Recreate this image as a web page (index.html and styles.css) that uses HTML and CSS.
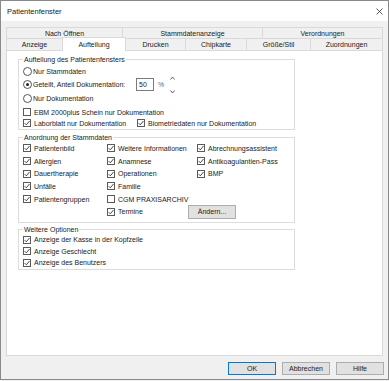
FILE: index.html
```html
<!DOCTYPE html>
<html lang="de">

<head>
    <meta charset="UTF-8">
    <meta name="viewport" content="width=device-width, initial-scale=1.0">
    <title>Patientenfenster</title>
    <link rel="stylesheet" href="styles.css">
</head>

<body>
    <div class="window">
        <header class="title_bar">
            <span class="title">Patientenfenster</span>
            <svg class="close" width="7" height="7" viewBox="0 0 7 7">
                <path d="M0.5 0.5L6.5 6.5M6.5 0.5L0.5 6.5" stroke="#333" stroke-width="0.8" />
            </svg>
        </header>

        <nav class="tabs">
            <div class="tab_row row_back">
                <div class="tab">Nach Öffnen</div>
                <div class="tab">Stammdatenanzeige</div>
                <div class="tab">Verordnungen</div>
            </div>
            <div class="tab_row row_front">
                <div class="tab">Anzeige</div>
                <div class="tab tab_active">Aufteilung</div>
                <div class="tab">Drucken</div>
                <div class="tab">Chipkarte</div>
                <div class="tab">Größe/Stil</div>
                <div class="tab">Zuordnungen</div>
            </div>
        </nav>

        <section class="panel">
            <fieldset class="group group_split">
                <legend>Aufteilung des Patientenfensters</legend>
                <div class="split_rows">
                    <div class="opt"><span class="radio"></span>Nur Stammdaten</div>
                    <div class="opt opt_share">
                        <span class="radio radio_on"></span>
                        <span class="share_label">Geteilt, Anteil Dokumentation:</span>
                        <span class="num_box">50</span>
                        <span class="percent">%</span>
                        <span class="spin">
                            <svg width="5" height="4" viewBox="0 0 5 4">
                                <path d="M0.5 3.5L2.5 1L4.5 3.5" fill="none" stroke="#555" stroke-width="0.9" />
                            </svg>
                            <svg width="5" height="4" viewBox="0 0 5 4">
                                <path d="M0.5 0.5L2.5 3L4.5 0.5" fill="none" stroke="#555" stroke-width="0.9" />
                            </svg>
                        </span>
                    </div>
                    <div class="opt"><span class="radio"></span>Nur Dokumentation</div>
                    <div class="opt opt_gap"><span class="check"></span>EBM 2000plus Schein nur Dokumentation</div>
                    <div class="opt opt_tight">
                        <span class="item item_labor"><span class="check check_on"></span>Laborblatt nur Dokumentation</span>
                        <span class="item"><span class="check check_on"></span>Biometriedaten nur Dokumentation</span>
                    </div>
                </div>
            </fieldset>

            <fieldset class="group group_stamm">
                <legend>Anordnung der Stammdaten</legend>
                <div class="stamm_grid">
                    <span class="item"><span class="check check_on"></span>Patientenbild</span>
                    <span class="item"><span class="check check_on"></span>Weitere Informationen</span>
                    <span class="item"><span class="check check_on"></span>Abrechnungsassistent</span>

                    <span class="item"><span class="check check_on"></span>Allergien</span>
                    <span class="item"><span class="check check_on"></span>Anamnese</span>
                    <span class="item"><span class="check check_on"></span>Antikoagulantien-Pass</span>

                    <span class="item"><span class="check check_on"></span>Dauertherapie</span>
                    <span class="item"><span class="check check_on"></span>Operationen</span>
                    <span class="item"><span class="check check_on"></span>BMP</span>

                    <span class="item"><span class="check check_on"></span>Unfälle</span>
                    <span class="item"><span class="check check_on"></span>Familie</span>
                    <span class="blank"></span>

                    <span class="item"><span class="check check_on"></span>Patientengruppen</span>
                    <span class="item"><span class="check"></span>CGM PRAXISARCHIV</span>
                    <span class="blank"></span>

                    <span class="blank"></span>
                    <span class="item"><span class="check check_on"></span>Termine</span>
                    <span class="btn btn_change">Ändern...</span>
                </div>
            </fieldset>

            <fieldset class="group group_more">
                <legend>Weitere Optionen</legend>
                <div class="more_rows">
                    <span class="item"><span class="check check_on"></span>Anzeige der Kasse in der Kopfzeile</span>
                    <span class="item"><span class="check check_on"></span>Anzeige Geschlecht</span>
                    <span class="item"><span class="check check_on"></span>Anzeige des Benutzers</span>
                </div>
            </fieldset>
        </section>

        <footer class="buttons">
            <span class="btn btn_default">OK</span>
            <span class="btn">Abbrechen</span>
            <span class="btn">Hilfe</span>
        </footer>
    </div>
</body>

</html>
```

FILE: styles.css
```css
* {
    margin: 0;
    padding: 0;
    box-sizing: border-box;
}

body {
    background-color: #f0f0f0;
    font-family: "Liberation Sans", Arial, sans-serif;
    font-size: 7px;
    color: #1a1a1a;
}

.window {
    width: 389px;
    height: 380px;
    border: 1px solid #8a8a8a;
    background-color: #f0f0f0;
    display: flex;
    flex-direction: column;
}

.title_bar {
    height: 20px;
    background-color: #fff;
    display: flex;
    align-items: center;
    justify-content: space-between;
    padding: 0 5px 0 6px;
}

.title {
    font-size: 7.5px;
}

/* tabs */
.tabs {
    margin: 6px 5px 0 5px;
}

.tab_row {
    display: grid;
}

.row_back {
    grid-template-columns: 116px 140px 1fr;
    height: 11px;
}

.row_front {
    grid-template-columns: 56px 64px 59px 61px 64px 1fr;
    height: 12px;
}

.tab {
    border-top: 1px solid #d9d9d9;
    border-left: 1px solid #d9d9d9;
    background-color: #f0f0f0;
    display: flex;
    align-items: center;
    justify-content: center;
    white-space: nowrap;
}

.tab:last-child {
    border-right: 1px solid #d9d9d9;
}

.tab_active {
    background-color: #fff;
    border-right: 1px solid #d9d9d9;
    margin-top: -1px;
    margin-bottom: -1px;
    position: relative;
    z-index: 1;
}

.tab_active + .tab {
    border-left: none;
}

/* panel */
.panel {
    margin: 0 5px;
    height: 306px;
    flex: none;
    background-color: #fff;
    border: 1px solid #d9d9d9;
    padding: 4px 0 0 11px;
}

.group {
    width: 277px;
    border: 1px solid #dcdcdc;
    padding: 0 0 0 4px;
}

.group legend {
    line-height: 9px;
    padding: 0 1px;
}

.group_split {
    padding-top: 2px;
    padding-bottom: 1px;
}

.group_stamm {
    margin-top: 3px;
    padding-bottom: 4px;
}

.group_more {
    margin-top: 2px;
    padding-bottom: 0;
}

.split_rows {
    display: flex;
    flex-direction: column;
    gap: 2px;
}

.opt {
    display: flex;
    align-items: center;
    height: 10px;
    white-space: nowrap;
}

.opt_share {
    height: 13px;
}

.opt_gap {
    margin-top: 2px;
}

.opt_tight {
    margin-top: -1px;
}

.item {
    display: flex;
    align-items: center;
    white-space: nowrap;
}

.item_labor {
    width: 114px;
}

.share_label {
    width: 103px;
}

.num_box {
    width: 18px;
    height: 13px;
    border: 1px solid #7a7a7a;
    padding-left: 2px;
    line-height: 11px;
}

.percent {
    margin-left: 4px;
    color: #666;
}

.spin {
    margin-left: 6px;
    height: 18px;
    display: flex;
    flex-direction: column;
    justify-content: space-between;
}

.spin svg {
    display: block;
}

.stamm_grid {
    display: grid;
    grid-template-columns: 84px 90px 1fr;
    grid-auto-rows: 12.7px;
    align-items: center;
}

.more_rows {
    display: grid;
    grid-auto-rows: 11.5px;
    align-items: center;
}

/* controls */
.check {
    width: 8px;
    height: 8px;
    border: 1px solid #5a5a5a;
    background-color: #fff;
    margin-right: 3px;
    flex: none;
}

.check_on {
    background-image: url("data:image/svg+xml,%3Csvg xmlns='http://www.w3.org/2000/svg' width='6' height='6' viewBox='0 0 6 6'%3E%3Cpath d='M0.6 3.1L2.3 4.8L5.5 1' fill='none' stroke='%23333' stroke-width='0.9'/%3E%3C/svg%3E");
    background-repeat: no-repeat;
}

.radio {
    width: 9px;
    height: 9px;
    border: 1px solid #555;
    border-radius: 50%;
    margin-right: 1px;
    flex: none;
    display: flex;
    align-items: center;
    justify-content: center;
}

.radio_on::after {
    content: "";
    width: 3px;
    height: 3px;
    border-radius: 50%;
    background-color: #222;
}

.btn {
    width: 48px;
    height: 13px;
    background-color: #e1e1e1;
    border: 1px solid #adadad;
    display: flex;
    align-items: center;
    justify-content: center;
    white-space: nowrap;
}

.btn_default {
    border-color: #0078d7;
}

.btn_change {
    height: 14px;
    margin-left: -9px;
}

.buttons {
    display: flex;
    justify-content: flex-end;
    gap: 6px;
    margin: 6px 4px 0 0;
}
```
